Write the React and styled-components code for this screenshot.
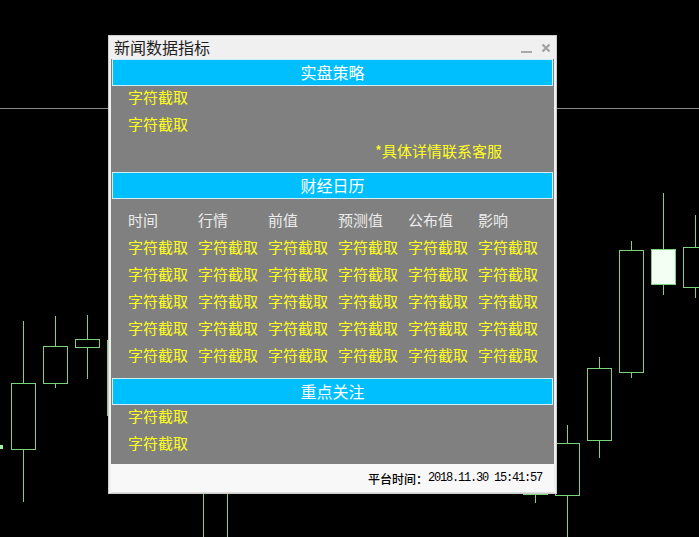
import React from "react";
import styled, { createGlobalStyle } from "styled-components";

//Chart data: x centre, wick top, wick bottom, body top, body bottom, filled
const candles = [
    { x: 23, hi: 321, lo: 502, top: 383, bottom: 449 },
    { x: 55, hi: 316, lo: 388, top: 346, bottom: 383 },
    { x: 87, hi: 315, lo: 379, top: 339, bottom: 347 },
    { x: 119, hi: 300, lo: 430, top: 340, bottom: 415 },
    { x: 215, hi: 440, lo: 580, top: 455, bottom: 570 },
    { x: 535, hi: 470, lo: 503, top: 480, bottom: 494 },
    { x: 567, hi: 425, lo: 580, top: 443, bottom: 495 },
    { x: 599, hi: 357, lo: 458, top: 368, bottom: 440 },
    { x: 631, hi: 241, lo: 378, top: 250, bottom: 372 },
    { x: 663, hi: 193, lo: 295, top: 249, bottom: 284, filled: true },
    { x: 695, hi: 215, lo: 298, top: 247, bottom: 287 },
];

const columns = ["时间", "行情", "前值", "预测值", "公布值", "影响"];
const tableRows = [0, 1, 2, 3, 4];

const App = () => {
    return (
        <Stage>
            <GlobalStyle />
            <Chart width="699" height="537" viewBox="0 0 699 537">
                <line x1="0" y1="108.5" x2="699" y2="108.5" stroke="#8a8a8a" strokeWidth="1" />
                <rect x="-2" y="445" width="5" height="4" fill="#a6f0a6" />
                {candles.map((c) => (
                    <g key={c.x} stroke="#7ad27a" strokeWidth="1">
                        <line x1={c.x + 0.5} y1={c.hi} x2={c.x + 0.5} y2={c.lo} />
                        <rect
                            x={c.x - 11.5}
                            y={c.top + 0.5}
                            width="24"
                            height={c.bottom - c.top}
                            fill={c.filled ? "#f2fff2" : "#000"}
                        />
                    </g>
                ))}
            </Chart>

            <Window>
                <TitleBar>
                    <Title>新闻数据指标</Title>
                    <WinButtons>
                        <Minimize />
                        <Close viewBox="0 0 10 10">
                            <path d="M1.5 1.5 L8.5 8.5 M8.5 1.5 L1.5 8.5" />
                        </Close>
                    </WinButtons>
                </TitleBar>

                <Panel>
                    <SectionHead>实盘策略</SectionHead>
                    <SectionBody pb={5}>
                        <Row>字符截取</Row>
                        <Row>字符截取</Row>
                        <Row indent={247}>*具体详情联系客服</Row>
                    </SectionBody>

                    <SectionHead>财经日历</SectionHead>
                    <SectionBody pt={10} pb={7}>
                        <Grid>
                            {columns.map((c) => (
                                <HeadCell key={c}>{c}</HeadCell>
                            ))}
                            {tableRows.map((r) =>
                                columns.map((c) => <Cell key={r + c}>字符截取</Cell>)
                            )}
                        </Grid>
                    </SectionBody>

                    <SectionHead>重点关注</SectionHead>
                    <SectionBody pb={5}>
                        <Row>字符截取</Row>
                        <Row>字符截取</Row>
                    </SectionBody>
                </Panel>

                <Footer>
                    <Label>平台时间：</Label>
                    <Clock>2018.11.30 15:41:57</Clock>
                </Footer>
            </Window>
        </Stage>
    );
};

const GlobalStyle = createGlobalStyle`
    html, body {
        margin: 0;
        padding: 0;
        background: #000;
    }
    * {
        box-sizing: border-box;
    }
`;

const Stage = styled.div`
    position: relative;
    width: 699px;
    height: 537px;
    overflow: hidden;
    background: #000;
    font-family: "Noto Sans CJK SC", "Microsoft YaHei", sans-serif;
`;

const Chart = styled.svg`
    position: absolute;
    left: 0;
    top: 0;
    display: block;
`;

//Window
const Window = styled.div`
    position: absolute;
    left: 108px;
    top: 35px;
    width: 449px;
    height: 459px;
    display: flex;
    flex-direction: column;
    padding: 0 2px;
    background: #f0f0f0;
    border: 1px solid #cdcdcd;
`;

const TitleBar = styled.div`
    height: 23px;
    display: flex;
    align-items: center;
    justify-content: space-between;
    padding: 0 3px 0 3px;
`;

const Title = styled.span`
    font-size: 16px;
    line-height: 23px;
    color: #1e1e1e;
`;

const WinButtons = styled.div`
    display: flex;
    align-items: center;
    gap: 9px;
`;

const Minimize = styled.span`
    width: 11px;
    height: 2px;
    margin-top: 8px;
    background: #a8a8a8;
`;

const Close = styled.svg`
    width: 10px;
    height: 10px;
    margin-top: 1px;
    stroke: #a4a4a4;
    stroke-width: 2.4;
    fill: none;
`;

//Panel
const Panel = styled.div`
    background: #808080;
    padding: 0 1px;
`;

const SectionHead = styled.div`
    height: 27px;
    background: #00bfff;
    border: 1px solid #cfeffc;
    color: #fff;
    font-size: 16px;
    line-height: 25px;
    text-align: center;
`;

const SectionBody = styled.div`
    padding: ${(p) => p.pt || 0}px 0 ${(p) => p.pb || 0}px 16px;
`;

const Row = styled.div`
    height: 27px;
    line-height: 21px;
    padding-left: ${(p) => p.indent || 0}px;
    font-size: 15px;
    color: #ffff1e;
`;

const Grid = styled.div`
    display: grid;
    grid-template-columns: repeat(6, 70px);
    grid-auto-rows: 27px;
`;

const HeadCell = styled.div`
    font-size: 15px;
    line-height: 21px;
    color: #ececec;
`;

const Cell = styled(HeadCell)`
    color: #ffff1e;
`;

//Footer
const Footer = styled.div`
    height: 29px;
    display: flex;
    align-items: center;
    justify-content: flex-end;
    padding-right: 12px;
    background: #f8f8f8;
    border-bottom: 1px solid #dcdcdc;
`;

const Label = styled.span`
    font-size: 12px;
    font-weight: 500;
    color: #000;
`;

const Clock = styled.span`
    font-family: "Liberation Mono", monospace;
    font-size: 12px;
    letter-spacing: -1.2px;
    color: #000;
`;

export default App;
